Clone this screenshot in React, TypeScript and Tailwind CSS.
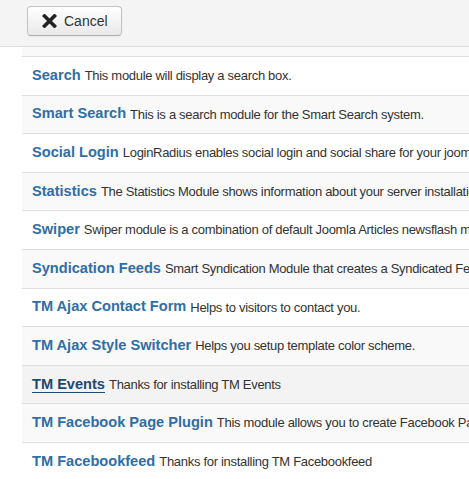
import React from "react";

const modules = [
  { title: "Search", desc: "This module will display a search box." },
  { title: "Smart Search", desc: "This is a search module for the Smart Search system." },
  { title: "Social Login", desc: "LoginRadius enables social login and social share for your joomla website." },
  { title: "Statistics", desc: "The Statistics Module shows information about your server installation." },
  { title: "Swiper", desc: "Swiper module is a combination of default Joomla Articles newsflash module." },
  { title: "Syndication Feeds", desc: "Smart Syndication Module that creates a Syndicated Feed." },
  { title: "TM Ajax Contact Form", desc: "Helps to visitors to contact you." },
  { title: "TM Ajax Style Switcher", desc: "Helps you setup template color scheme." },
  { title: "TM Events", desc: "Thanks for installing TM Events", hover: true },
  { title: "TM Facebook Page Plugin", desc: "This module allows you to create Facebook Page widget." },
  { title: "TM Facebookfeed", desc: "Thanks for installing TM Facebookfeed" },
];

function CancelIcon() {
  return (
    <svg width="15" height="14" viewBox="0 0 15 14" className="shrink-0">
      <path d="M2.5 2 L12.5 12 M12.5 2 L2.5 12" stroke="#222" strokeWidth="3.6" strokeLinecap="square" />
    </svg>
  );
}

export default function App() {
  return (
    <div className="w-[469px] h-[479px] overflow-hidden bg-white font-['Liberation_Sans',Arial,sans-serif]">
      {/* toolbar */}
      <div className="h-[47px] bg-[#f4f4f4] border-b border-[#dedede] pl-[27px] pt-[6px]">
        <button className="flex items-center h-[30px] w-[95px] pl-[14px] gap-[7px] rounded-[4px] border border-[#c4c4c4] border-b-[#b0b0b0] bg-gradient-to-b from-white to-[#e8e8e8] shadow-[inset_0_1px_0_rgba(255,255,255,0.3),0_1px_2px_rgba(0,0,0,0.05)] text-[14px] text-[#333]">
          <CancelIcon />
          Cancel
        </button>
      </div>

      {/* module list, wider than the window so long descriptions run off the edge */}
      <div className="pl-[22px] w-[700px]">
        <div className="h-[10px] bg-[#f9f9f9] border-b border-[#ddd]" />
        {modules.map((m, i) => (
          <div
            key={m.title}
            className={
              "flex items-center h-[38.6px] border-b border-[#ddd] pl-[10px] whitespace-nowrap " +
              (m.hover ? "bg-[#f3f3f3]" : i % 2 === 1 ? "bg-[#f9f9f9]" : "bg-white")
            }
          >
            <a
              href="#"
              className={
                "font-bold text-[14.6px] " +
                (m.hover ? "text-[#1d4a70] underline underline-offset-[3px]" : "text-[#2f6ea7]")
              }
            >
              {m.title}
            </a>
            <span className="ml-[4px] text-[13px] tracking-[-0.3px] text-[#333]">{m.desc}</span>
          </div>
        ))}
      </div>
    </div>
  );
}
